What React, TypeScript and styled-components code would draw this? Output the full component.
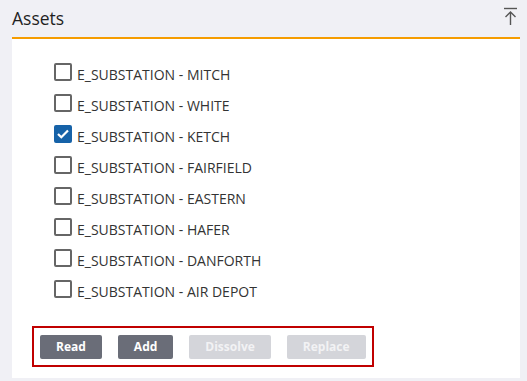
import styled, { createGlobalStyle } from "styled-components";

const GlobalStyle = createGlobalStyle`
    body{
        margin: 0;
        background: #f0f0f5;
        font-family: "Open Sans", "Liberation Sans", sans-serif;
    }
`;
const Page = styled.div`
    padding: 0 7px 3px 12px;
`;
const Header = styled.div`
    height: 37px;
    display: flex;
    align-items: center;
    justify-content: space-between;
    border-bottom: 2px solid #f59c00;
    h1{
        margin: 0;
        font-size: 17.5px;
        font-weight: 400;
        color: #1f1f1f;
        line-height: 1;
    }
    button{
        border: none;
        background: none;
        padding: 0;
        margin-right: 3px;
        margin-bottom: 5px;
        display: flex;
    }
`;
const Body = styled.div`
    background: #fff;
    padding: 20px 0 11px 20px;
`;
const List = styled.ul`
    list-style: none;
    margin: 0 0 18px 22px;
    padding: 0;
`;
const Row = styled.li`
    height: 31.07px;
    display: flex;
    align-items: center;
    gap: 5px;
    font-size: 14px;
    color: #333;
`;
const Box = styled.span<{ $checked: boolean }>`
    width: 18px;
    height: 18px;
    margin-bottom: 5px;
    box-sizing: border-box;
    border-radius: 2px;
    border: 2px solid ${p => p.$checked ? "#1662a8" : "#666"};
    background: ${p => p.$checked ? "#1662a8" : "#fff"};
    display: flex;
    align-items: center;
    justify-content: center;
`;
const ButtonGroup = styled.div`
    display: inline-flex;
    gap: 16px;
    border: 2px solid #c00000;
    padding: 7px 6px 6px 6px;
`;
const Btn = styled.button<{ $disabled?: boolean }>`
    height: 24px;
    padding: 0 16px;
    border: none;
    border-radius: 2px;
    font-family: "Open Sans", "Liberation Sans", sans-serif;
    font-weight: 700;
    font-size: 12px;
    color: ${p => p.$disabled ? "#f2f2f4" : "#fff"};
    background: ${p => p.$disabled ? "#d4d5da" : "#6a6d78"};
`;

const assets = ["MITCH", "WHITE", "KETCH", "FAIRFIELD", "EASTERN", "HAFER", "DANFORTH", "AIR DEPOT"];

export default function App() {
    return (
        <Page>
            <GlobalStyle />
            <Header>
                <h1>Assets</h1>
                <button>
                    <svg width="13" height="18" viewBox="0 0 13 18" fill="none" stroke="#555" strokeWidth="1.4">
                        <path d="M0 1.5h13" />
                        <path d="M6.5 5v13M1.5 10l5-5 5 5" />
                    </svg>
                </button>
            </Header>
            <Body>
                <List>
                    {assets.map(a =>
                        <Row key={a}>
                            <Box $checked={a === "KETCH"}>
                                {a === "KETCH" &&
                                    <svg width="12" height="10" viewBox="0 0 12 10" fill="none" stroke="#fff" strokeWidth="2.2">
                                        <path d="M1 5l3.3 3.3L11 1.5" />
                                    </svg>}
                            </Box>
                            E_SUBSTATION - {a}
                        </Row>
                    )}
                </List>
                <ButtonGroup>
                    <Btn>Read</Btn>
                    <Btn>Add</Btn>
                    <Btn $disabled>Dissolve</Btn>
                    <Btn $disabled>Replace</Btn>
                </ButtonGroup>
            </Body>
        </Page>
    );
}
